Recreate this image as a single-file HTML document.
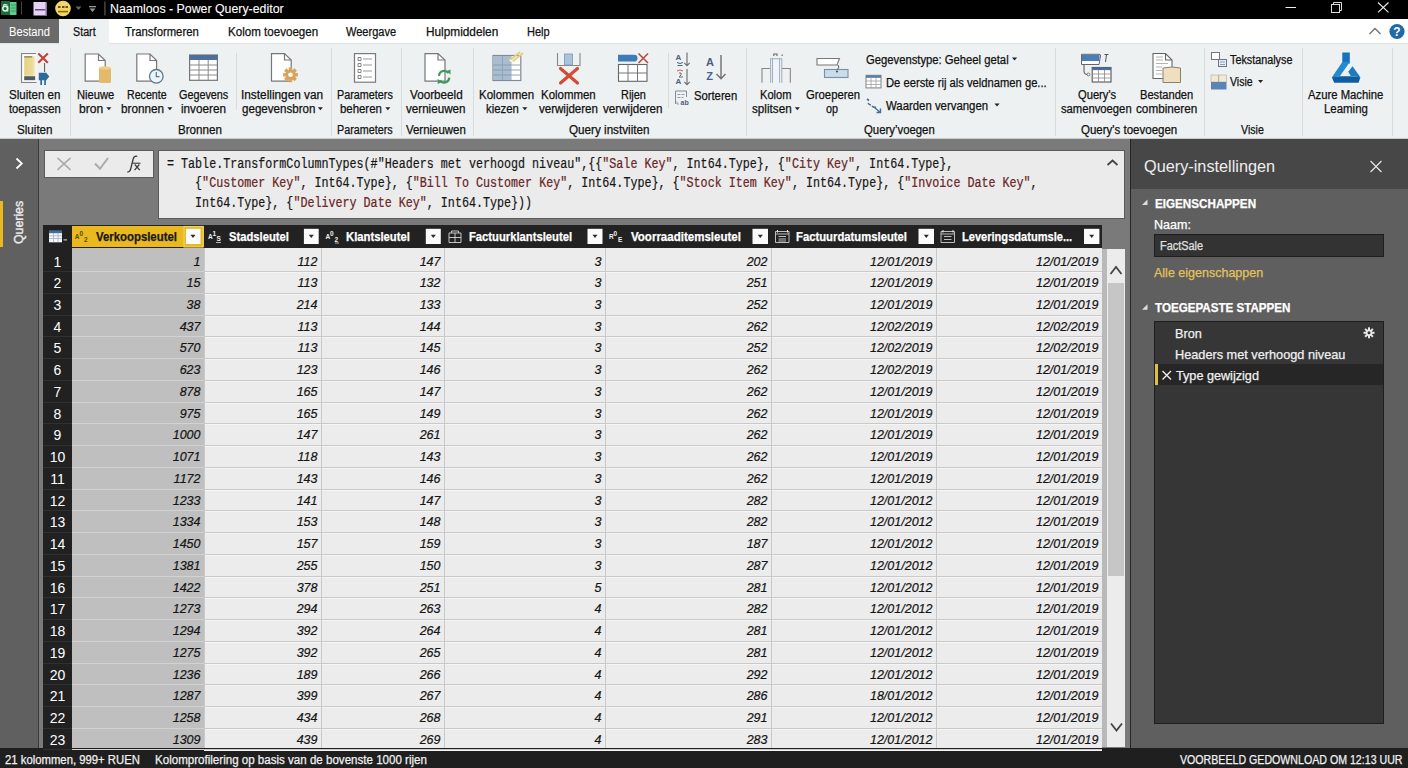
<!DOCTYPE html><html><head><meta charset="utf-8"><title>Power Query-editor</title><style>*{margin:0;padding:0;box-sizing:border-box}
html,body{width:1408px;height:768px;overflow:hidden;background:#7a7a7a;font-family:"Liberation Sans",sans-serif;position:relative}
.a{position:absolute;white-space:nowrap}
.t{position:absolute;white-space:nowrap;transform-origin:0 0;-webkit-text-stroke:0.25px currentColor}
.rn{position:absolute;left:43px;width:29px;height:21.7px;line-height:24px;font-size:14px;color:#fff;text-align:center}
.cell{position:absolute;height:21.7px;line-height:24px;font-size:12.5px;font-style:italic;color:#141414;text-align:right;white-space:nowrap;-webkit-text-stroke:0.2px #141414}
</style></head><body><div class="a" style="left:0;top:0;width:1408px;height:19px;background:#000"></div>
<div class="a" style="left:0;top:19px;width:1408px;height:24px;background:#fff"></div>
<div class="a" style="left:0;top:19px;width:59px;height:24px;background:#6a6a6a"></div>
<div class="a" style="left:59px;top:19px;width:50px;height:25px;background:#eef1f2"></div>
<div class="a" style="left:0;top:43px;width:1408px;height:96px;background:#eef1f2;border-top:1px solid #dedfe0;border-bottom:1px solid #c9c9c9"></div>
<div class="a" style="left:59px;top:43px;width:50px;height:2px;background:#eef1f2"></div>
<!-- separators -->
<div class="a" style="left:70px;top:48px;width:1px;height:88px;background:#d9dadb"></div>
<div class="a" style="left:236px;top:53px;width:1px;height:57px;background:#d9dadb"></div>
<div class="a" style="left:331px;top:48px;width:1px;height:88px;background:#d9dadb"></div>
<div class="a" style="left:401px;top:48px;width:1px;height:88px;background:#d9dadb"></div>
<div class="a" style="left:473px;top:48px;width:1px;height:88px;background:#d9dadb"></div>
<div class="a" style="left:668px;top:53px;width:1px;height:55px;background:#d9dadb"></div>
<div class="a" style="left:746px;top:48px;width:1px;height:88px;background:#d9dadb"></div>
<div class="a" style="left:1055px;top:48px;width:1px;height:88px;background:#d9dadb"></div>
<div class="a" style="left:1204px;top:48px;width:1px;height:88px;background:#d9dadb"></div>
<div class="a" style="left:1302px;top:48px;width:1px;height:88px;background:#d9dadb"></div>
<div class="a" style="left:1392px;top:48px;width:1px;height:88px;background:#d9dadb"></div>
<!-- sidebar -->
<div class="a" style="left:0;top:139px;width:38px;height:609px;background:#606060"></div>
<div class="a" style="left:38px;top:139px;width:1px;height:609px;background:#3a3a3a"></div>
<div class="a" style="left:0;top:201px;width:3.3px;height:46px;background:#e9b91f"></div>
<!-- formula bar -->
<div class="a" style="left:43.5px;top:150px;width:110px;height:28px;background:#ebebeb;border:1px solid #5a5a5a"></div>
<div class="a" style="left:157.5px;top:150px;width:967.5px;height:69px;background:#ebebeb;border:1px solid #5a5a5a"></div>
<!-- table header -->
<div class="a" style="left:43px;top:225px;width:1059px;height:24.5px;background:#222"></div>
<div class="a" style="left:72px;top:226px;width:132px;height:21px;background:#e9b91f"></div>
<!-- scrollbar -->
<div class="a" style="left:1102px;top:249px;width:5px;height:498px;background:#b9b9b9"></div>
<div class="a" style="left:1107px;top:249px;width:18px;height:498px;background:#ececec"></div>
<div class="a" style="left:1108px;top:283px;width:16px;height:293px;background:#c6c6c6"></div>
<!-- right panel -->
<div class="a" style="left:1130px;top:139px;width:1px;height:609px;background:#262626"></div>
<div class="a" style="left:1131px;top:139px;width:277px;height:49.5px;background:#474747"></div>
<div class="a" style="left:1131px;top:188.5px;width:277px;height:559.5px;background:#5f5f5f"></div>
<div class="a" style="left:1154px;top:233.5px;width:230px;height:23px;background:#333;border:1px solid #1e1e1e"></div>
<div class="a" style="left:1154px;top:320.5px;width:229.5px;height:403px;background:#363636;border:1px solid #1e1e1e"></div>
<div class="a" style="left:1155px;top:364px;width:227.5px;height:20.5px;background:#262626"></div>
<div class="a" style="left:1154.5px;top:364px;width:3px;height:20.5px;background:#e0c040"></div>
<!-- status bar -->
<div class="a" style="left:0;top:747.5px;width:1408px;height:20.5px;background:#1f1f1f"></div>
<div class="a" style="left:43px;top:225px;width:29px;height:523px;background:#212121"></div><div class="a" style="left:72px;top:248px;width:132px;height:500px;background:#bfbfbf"></div><div class="a" style="left:204px;top:248px;width:898px;height:500px;background:#ececec"></div><div class="a" style="left:72px;top:271.24px;width:132px;height:1px;background:#d2d2d2"></div><div class="a" style="left:204px;top:271.24px;width:898px;height:1px;background:#c9c9c9"></div><div class="a" style="left:204px;top:272.24px;width:898px;height:1px;background:#f5f5f5"></div><div class="a" style="left:43px;top:271.24px;width:29px;height:1px;background:#303030"></div><div class="rn" style="top:249.50px">1</div><div class="cell" style="top:249.50px;left:72px;width:128.5px">1</div><div class="cell" style="top:249.50px;left:204px;width:113.5px">112</div><div class="cell" style="top:249.50px;left:321px;width:119.5px">147</div><div class="cell" style="top:249.50px;left:444px;width:157.5px">3</div><div class="cell" style="top:249.50px;left:605px;width:162.5px">202</div><div class="cell" style="top:249.50px;left:771px;width:161.5px">12/01/2019</div><div class="cell" style="top:249.50px;left:936px;width:162.5px">12/01/2019</div><div class="a" style="left:72px;top:292.97px;width:132px;height:1px;background:#d2d2d2"></div><div class="a" style="left:204px;top:292.97px;width:898px;height:1px;background:#c9c9c9"></div><div class="a" style="left:204px;top:293.97px;width:898px;height:1px;background:#f5f5f5"></div><div class="a" style="left:43px;top:292.97px;width:29px;height:1px;background:#303030"></div><div class="rn" style="top:271.24px">2</div><div class="cell" style="top:271.24px;left:72px;width:128.5px">15</div><div class="cell" style="top:271.24px;left:204px;width:113.5px">113</div><div class="cell" style="top:271.24px;left:321px;width:119.5px">132</div><div class="cell" style="top:271.24px;left:444px;width:157.5px">3</div><div class="cell" style="top:271.24px;left:605px;width:162.5px">251</div><div class="cell" style="top:271.24px;left:771px;width:161.5px">12/01/2019</div><div class="cell" style="top:271.24px;left:936px;width:162.5px">12/01/2019</div><div class="a" style="left:72px;top:314.71px;width:132px;height:1px;background:#d2d2d2"></div><div class="a" style="left:204px;top:314.71px;width:898px;height:1px;background:#c9c9c9"></div><div class="a" style="left:204px;top:315.71px;width:898px;height:1px;background:#f5f5f5"></div><div class="a" style="left:43px;top:314.71px;width:29px;height:1px;background:#303030"></div><div class="rn" style="top:292.97px">3</div><div class="cell" style="top:292.97px;left:72px;width:128.5px">38</div><div class="cell" style="top:292.97px;left:204px;width:113.5px">214</div><div class="cell" style="top:292.97px;left:321px;width:119.5px">133</div><div class="cell" style="top:292.97px;left:444px;width:157.5px">3</div><div class="cell" style="top:292.97px;left:605px;width:162.5px">252</div><div class="cell" style="top:292.97px;left:771px;width:161.5px">12/01/2019</div><div class="cell" style="top:292.97px;left:936px;width:162.5px">12/01/2019</div><div class="a" style="left:72px;top:336.45px;width:132px;height:1px;background:#d2d2d2"></div><div class="a" style="left:204px;top:336.45px;width:898px;height:1px;background:#c9c9c9"></div><div class="a" style="left:204px;top:337.45px;width:898px;height:1px;background:#f5f5f5"></div><div class="a" style="left:43px;top:336.45px;width:29px;height:1px;background:#303030"></div><div class="rn" style="top:314.71px">4</div><div class="cell" style="top:314.71px;left:72px;width:128.5px">437</div><div class="cell" style="top:314.71px;left:204px;width:113.5px">113</div><div class="cell" style="top:314.71px;left:321px;width:119.5px">144</div><div class="cell" style="top:314.71px;left:444px;width:157.5px">3</div><div class="cell" style="top:314.71px;left:605px;width:162.5px">262</div><div class="cell" style="top:314.71px;left:771px;width:161.5px">12/02/2019</div><div class="cell" style="top:314.71px;left:936px;width:162.5px">12/02/2019</div><div class="a" style="left:72px;top:358.19px;width:132px;height:1px;background:#d2d2d2"></div><div class="a" style="left:204px;top:358.19px;width:898px;height:1px;background:#c9c9c9"></div><div class="a" style="left:204px;top:359.19px;width:898px;height:1px;background:#f5f5f5"></div><div class="a" style="left:43px;top:358.19px;width:29px;height:1px;background:#303030"></div><div class="rn" style="top:336.45px">5</div><div class="cell" style="top:336.45px;left:72px;width:128.5px">570</div><div class="cell" style="top:336.45px;left:204px;width:113.5px">113</div><div class="cell" style="top:336.45px;left:321px;width:119.5px">145</div><div class="cell" style="top:336.45px;left:444px;width:157.5px">3</div><div class="cell" style="top:336.45px;left:605px;width:162.5px">252</div><div class="cell" style="top:336.45px;left:771px;width:161.5px">12/02/2019</div><div class="cell" style="top:336.45px;left:936px;width:162.5px">12/02/2019</div><div class="a" style="left:72px;top:379.92px;width:132px;height:1px;background:#d2d2d2"></div><div class="a" style="left:204px;top:379.92px;width:898px;height:1px;background:#c9c9c9"></div><div class="a" style="left:204px;top:380.92px;width:898px;height:1px;background:#f5f5f5"></div><div class="a" style="left:43px;top:379.92px;width:29px;height:1px;background:#303030"></div><div class="rn" style="top:358.19px">6</div><div class="cell" style="top:358.19px;left:72px;width:128.5px">623</div><div class="cell" style="top:358.19px;left:204px;width:113.5px">123</div><div class="cell" style="top:358.19px;left:321px;width:119.5px">146</div><div class="cell" style="top:358.19px;left:444px;width:157.5px">3</div><div class="cell" style="top:358.19px;left:605px;width:162.5px">262</div><div class="cell" style="top:358.19px;left:771px;width:161.5px">12/02/2019</div><div class="cell" style="top:358.19px;left:936px;width:162.5px">12/01/2019</div><div class="a" style="left:72px;top:401.66px;width:132px;height:1px;background:#d2d2d2"></div><div class="a" style="left:204px;top:401.66px;width:898px;height:1px;background:#c9c9c9"></div><div class="a" style="left:204px;top:402.66px;width:898px;height:1px;background:#f5f5f5"></div><div class="a" style="left:43px;top:401.66px;width:29px;height:1px;background:#303030"></div><div class="rn" style="top:379.92px">7</div><div class="cell" style="top:379.92px;left:72px;width:128.5px">878</div><div class="cell" style="top:379.92px;left:204px;width:113.5px">165</div><div class="cell" style="top:379.92px;left:321px;width:119.5px">147</div><div class="cell" style="top:379.92px;left:444px;width:157.5px">3</div><div class="cell" style="top:379.92px;left:605px;width:162.5px">262</div><div class="cell" style="top:379.92px;left:771px;width:161.5px">12/01/2019</div><div class="cell" style="top:379.92px;left:936px;width:162.5px">12/01/2019</div><div class="a" style="left:72px;top:423.40px;width:132px;height:1px;background:#d2d2d2"></div><div class="a" style="left:204px;top:423.40px;width:898px;height:1px;background:#c9c9c9"></div><div class="a" style="left:204px;top:424.40px;width:898px;height:1px;background:#f5f5f5"></div><div class="a" style="left:43px;top:423.40px;width:29px;height:1px;background:#303030"></div><div class="rn" style="top:401.66px">8</div><div class="cell" style="top:401.66px;left:72px;width:128.5px">975</div><div class="cell" style="top:401.66px;left:204px;width:113.5px">165</div><div class="cell" style="top:401.66px;left:321px;width:119.5px">149</div><div class="cell" style="top:401.66px;left:444px;width:157.5px">3</div><div class="cell" style="top:401.66px;left:605px;width:162.5px">262</div><div class="cell" style="top:401.66px;left:771px;width:161.5px">12/01/2019</div><div class="cell" style="top:401.66px;left:936px;width:162.5px">12/01/2019</div><div class="a" style="left:72px;top:445.13px;width:132px;height:1px;background:#d2d2d2"></div><div class="a" style="left:204px;top:445.13px;width:898px;height:1px;background:#c9c9c9"></div><div class="a" style="left:204px;top:446.13px;width:898px;height:1px;background:#f5f5f5"></div><div class="a" style="left:43px;top:445.13px;width:29px;height:1px;background:#303030"></div><div class="rn" style="top:423.40px">9</div><div class="cell" style="top:423.40px;left:72px;width:128.5px">1000</div><div class="cell" style="top:423.40px;left:204px;width:113.5px">147</div><div class="cell" style="top:423.40px;left:321px;width:119.5px">261</div><div class="cell" style="top:423.40px;left:444px;width:157.5px">3</div><div class="cell" style="top:423.40px;left:605px;width:162.5px">262</div><div class="cell" style="top:423.40px;left:771px;width:161.5px">12/01/2019</div><div class="cell" style="top:423.40px;left:936px;width:162.5px">12/01/2019</div><div class="a" style="left:72px;top:466.87px;width:132px;height:1px;background:#d2d2d2"></div><div class="a" style="left:204px;top:466.87px;width:898px;height:1px;background:#c9c9c9"></div><div class="a" style="left:204px;top:467.87px;width:898px;height:1px;background:#f5f5f5"></div><div class="a" style="left:43px;top:466.87px;width:29px;height:1px;background:#303030"></div><div class="rn" style="top:445.13px">10</div><div class="cell" style="top:445.13px;left:72px;width:128.5px">1071</div><div class="cell" style="top:445.13px;left:204px;width:113.5px">118</div><div class="cell" style="top:445.13px;left:321px;width:119.5px">143</div><div class="cell" style="top:445.13px;left:444px;width:157.5px">3</div><div class="cell" style="top:445.13px;left:605px;width:162.5px">262</div><div class="cell" style="top:445.13px;left:771px;width:161.5px">12/01/2019</div><div class="cell" style="top:445.13px;left:936px;width:162.5px">12/01/2019</div><div class="a" style="left:72px;top:488.61px;width:132px;height:1px;background:#d2d2d2"></div><div class="a" style="left:204px;top:488.61px;width:898px;height:1px;background:#c9c9c9"></div><div class="a" style="left:204px;top:489.61px;width:898px;height:1px;background:#f5f5f5"></div><div class="a" style="left:43px;top:488.61px;width:29px;height:1px;background:#303030"></div><div class="rn" style="top:466.87px">11</div><div class="cell" style="top:466.87px;left:72px;width:128.5px">1172</div><div class="cell" style="top:466.87px;left:204px;width:113.5px">143</div><div class="cell" style="top:466.87px;left:321px;width:119.5px">146</div><div class="cell" style="top:466.87px;left:444px;width:157.5px">3</div><div class="cell" style="top:466.87px;left:605px;width:162.5px">262</div><div class="cell" style="top:466.87px;left:771px;width:161.5px">12/01/2019</div><div class="cell" style="top:466.87px;left:936px;width:162.5px">12/01/2019</div><div class="a" style="left:72px;top:510.34px;width:132px;height:1px;background:#d2d2d2"></div><div class="a" style="left:204px;top:510.34px;width:898px;height:1px;background:#c9c9c9"></div><div class="a" style="left:204px;top:511.34px;width:898px;height:1px;background:#f5f5f5"></div><div class="a" style="left:43px;top:510.34px;width:29px;height:1px;background:#303030"></div><div class="rn" style="top:488.61px">12</div><div class="cell" style="top:488.61px;left:72px;width:128.5px">1233</div><div class="cell" style="top:488.61px;left:204px;width:113.5px">141</div><div class="cell" style="top:488.61px;left:321px;width:119.5px">147</div><div class="cell" style="top:488.61px;left:444px;width:157.5px">3</div><div class="cell" style="top:488.61px;left:605px;width:162.5px">282</div><div class="cell" style="top:488.61px;left:771px;width:161.5px">12/01/2012</div><div class="cell" style="top:488.61px;left:936px;width:162.5px">12/01/2019</div><div class="a" style="left:72px;top:532.08px;width:132px;height:1px;background:#d2d2d2"></div><div class="a" style="left:204px;top:532.08px;width:898px;height:1px;background:#c9c9c9"></div><div class="a" style="left:204px;top:533.08px;width:898px;height:1px;background:#f5f5f5"></div><div class="a" style="left:43px;top:532.08px;width:29px;height:1px;background:#303030"></div><div class="rn" style="top:510.34px">13</div><div class="cell" style="top:510.34px;left:72px;width:128.5px">1334</div><div class="cell" style="top:510.34px;left:204px;width:113.5px">153</div><div class="cell" style="top:510.34px;left:321px;width:119.5px">148</div><div class="cell" style="top:510.34px;left:444px;width:157.5px">3</div><div class="cell" style="top:510.34px;left:605px;width:162.5px">282</div><div class="cell" style="top:510.34px;left:771px;width:161.5px">12/01/2012</div><div class="cell" style="top:510.34px;left:936px;width:162.5px">12/01/2019</div><div class="a" style="left:72px;top:553.82px;width:132px;height:1px;background:#d2d2d2"></div><div class="a" style="left:204px;top:553.82px;width:898px;height:1px;background:#c9c9c9"></div><div class="a" style="left:204px;top:554.82px;width:898px;height:1px;background:#f5f5f5"></div><div class="a" style="left:43px;top:553.82px;width:29px;height:1px;background:#303030"></div><div class="rn" style="top:532.08px">14</div><div class="cell" style="top:532.08px;left:72px;width:128.5px">1450</div><div class="cell" style="top:532.08px;left:204px;width:113.5px">157</div><div class="cell" style="top:532.08px;left:321px;width:119.5px">159</div><div class="cell" style="top:532.08px;left:444px;width:157.5px">3</div><div class="cell" style="top:532.08px;left:605px;width:162.5px">187</div><div class="cell" style="top:532.08px;left:771px;width:161.5px">12/01/2012</div><div class="cell" style="top:532.08px;left:936px;width:162.5px">12/01/2019</div><div class="a" style="left:72px;top:575.55px;width:132px;height:1px;background:#d2d2d2"></div><div class="a" style="left:204px;top:575.55px;width:898px;height:1px;background:#c9c9c9"></div><div class="a" style="left:204px;top:576.55px;width:898px;height:1px;background:#f5f5f5"></div><div class="a" style="left:43px;top:575.55px;width:29px;height:1px;background:#303030"></div><div class="rn" style="top:553.82px">15</div><div class="cell" style="top:553.82px;left:72px;width:128.5px">1381</div><div class="cell" style="top:553.82px;left:204px;width:113.5px">255</div><div class="cell" style="top:553.82px;left:321px;width:119.5px">150</div><div class="cell" style="top:553.82px;left:444px;width:157.5px">3</div><div class="cell" style="top:553.82px;left:605px;width:162.5px">287</div><div class="cell" style="top:553.82px;left:771px;width:161.5px">12/01/2012</div><div class="cell" style="top:553.82px;left:936px;width:162.5px">12/01/2019</div><div class="a" style="left:72px;top:597.29px;width:132px;height:1px;background:#d2d2d2"></div><div class="a" style="left:204px;top:597.29px;width:898px;height:1px;background:#c9c9c9"></div><div class="a" style="left:204px;top:598.29px;width:898px;height:1px;background:#f5f5f5"></div><div class="a" style="left:43px;top:597.29px;width:29px;height:1px;background:#303030"></div><div class="rn" style="top:575.55px">16</div><div class="cell" style="top:575.55px;left:72px;width:128.5px">1422</div><div class="cell" style="top:575.55px;left:204px;width:113.5px">378</div><div class="cell" style="top:575.55px;left:321px;width:119.5px">251</div><div class="cell" style="top:575.55px;left:444px;width:157.5px">5</div><div class="cell" style="top:575.55px;left:605px;width:162.5px">281</div><div class="cell" style="top:575.55px;left:771px;width:161.5px">12/01/2012</div><div class="cell" style="top:575.55px;left:936px;width:162.5px">12/01/2019</div><div class="a" style="left:72px;top:619.03px;width:132px;height:1px;background:#d2d2d2"></div><div class="a" style="left:204px;top:619.03px;width:898px;height:1px;background:#c9c9c9"></div><div class="a" style="left:204px;top:620.03px;width:898px;height:1px;background:#f5f5f5"></div><div class="a" style="left:43px;top:619.03px;width:29px;height:1px;background:#303030"></div><div class="rn" style="top:597.29px">17</div><div class="cell" style="top:597.29px;left:72px;width:128.5px">1273</div><div class="cell" style="top:597.29px;left:204px;width:113.5px">294</div><div class="cell" style="top:597.29px;left:321px;width:119.5px">263</div><div class="cell" style="top:597.29px;left:444px;width:157.5px">4</div><div class="cell" style="top:597.29px;left:605px;width:162.5px">282</div><div class="cell" style="top:597.29px;left:771px;width:161.5px">12/01/2012</div><div class="cell" style="top:597.29px;left:936px;width:162.5px">12/01/2019</div><div class="a" style="left:72px;top:640.77px;width:132px;height:1px;background:#d2d2d2"></div><div class="a" style="left:204px;top:640.77px;width:898px;height:1px;background:#c9c9c9"></div><div class="a" style="left:204px;top:641.77px;width:898px;height:1px;background:#f5f5f5"></div><div class="a" style="left:43px;top:640.77px;width:29px;height:1px;background:#303030"></div><div class="rn" style="top:619.03px">18</div><div class="cell" style="top:619.03px;left:72px;width:128.5px">1294</div><div class="cell" style="top:619.03px;left:204px;width:113.5px">392</div><div class="cell" style="top:619.03px;left:321px;width:119.5px">264</div><div class="cell" style="top:619.03px;left:444px;width:157.5px">4</div><div class="cell" style="top:619.03px;left:605px;width:162.5px">281</div><div class="cell" style="top:619.03px;left:771px;width:161.5px">12/01/2012</div><div class="cell" style="top:619.03px;left:936px;width:162.5px">12/01/2019</div><div class="a" style="left:72px;top:662.50px;width:132px;height:1px;background:#d2d2d2"></div><div class="a" style="left:204px;top:662.50px;width:898px;height:1px;background:#c9c9c9"></div><div class="a" style="left:204px;top:663.50px;width:898px;height:1px;background:#f5f5f5"></div><div class="a" style="left:43px;top:662.50px;width:29px;height:1px;background:#303030"></div><div class="rn" style="top:640.77px">19</div><div class="cell" style="top:640.77px;left:72px;width:128.5px">1275</div><div class="cell" style="top:640.77px;left:204px;width:113.5px">392</div><div class="cell" style="top:640.77px;left:321px;width:119.5px">265</div><div class="cell" style="top:640.77px;left:444px;width:157.5px">4</div><div class="cell" style="top:640.77px;left:605px;width:162.5px">281</div><div class="cell" style="top:640.77px;left:771px;width:161.5px">12/01/2012</div><div class="cell" style="top:640.77px;left:936px;width:162.5px">12/01/2019</div><div class="a" style="left:72px;top:684.24px;width:132px;height:1px;background:#d2d2d2"></div><div class="a" style="left:204px;top:684.24px;width:898px;height:1px;background:#c9c9c9"></div><div class="a" style="left:204px;top:685.24px;width:898px;height:1px;background:#f5f5f5"></div><div class="a" style="left:43px;top:684.24px;width:29px;height:1px;background:#303030"></div><div class="rn" style="top:662.50px">20</div><div class="cell" style="top:662.50px;left:72px;width:128.5px">1236</div><div class="cell" style="top:662.50px;left:204px;width:113.5px">189</div><div class="cell" style="top:662.50px;left:321px;width:119.5px">266</div><div class="cell" style="top:662.50px;left:444px;width:157.5px">4</div><div class="cell" style="top:662.50px;left:605px;width:162.5px">292</div><div class="cell" style="top:662.50px;left:771px;width:161.5px">12/01/2012</div><div class="cell" style="top:662.50px;left:936px;width:162.5px">12/01/2019</div><div class="a" style="left:72px;top:705.98px;width:132px;height:1px;background:#d2d2d2"></div><div class="a" style="left:204px;top:705.98px;width:898px;height:1px;background:#c9c9c9"></div><div class="a" style="left:204px;top:706.98px;width:898px;height:1px;background:#f5f5f5"></div><div class="a" style="left:43px;top:705.98px;width:29px;height:1px;background:#303030"></div><div class="rn" style="top:684.24px">21</div><div class="cell" style="top:684.24px;left:72px;width:128.5px">1287</div><div class="cell" style="top:684.24px;left:204px;width:113.5px">399</div><div class="cell" style="top:684.24px;left:321px;width:119.5px">267</div><div class="cell" style="top:684.24px;left:444px;width:157.5px">4</div><div class="cell" style="top:684.24px;left:605px;width:162.5px">286</div><div class="cell" style="top:684.24px;left:771px;width:161.5px">18/01/2012</div><div class="cell" style="top:684.24px;left:936px;width:162.5px">12/01/2019</div><div class="a" style="left:72px;top:727.71px;width:132px;height:1px;background:#d2d2d2"></div><div class="a" style="left:204px;top:727.71px;width:898px;height:1px;background:#c9c9c9"></div><div class="a" style="left:204px;top:728.71px;width:898px;height:1px;background:#f5f5f5"></div><div class="a" style="left:43px;top:727.71px;width:29px;height:1px;background:#303030"></div><div class="rn" style="top:705.98px">22</div><div class="cell" style="top:705.98px;left:72px;width:128.5px">1258</div><div class="cell" style="top:705.98px;left:204px;width:113.5px">434</div><div class="cell" style="top:705.98px;left:321px;width:119.5px">268</div><div class="cell" style="top:705.98px;left:444px;width:157.5px">4</div><div class="cell" style="top:705.98px;left:605px;width:162.5px">291</div><div class="cell" style="top:705.98px;left:771px;width:161.5px">12/01/2012</div><div class="cell" style="top:705.98px;left:936px;width:162.5px">12/01/2019</div><div class="a" style="left:72px;top:749.45px;width:132px;height:1px;background:#d2d2d2"></div><div class="a" style="left:204px;top:749.45px;width:898px;height:1px;background:#c9c9c9"></div><div class="a" style="left:204px;top:750.45px;width:898px;height:1px;background:#f5f5f5"></div><div class="a" style="left:43px;top:749.45px;width:29px;height:1px;background:#303030"></div><div class="rn" style="top:727.71px">23</div><div class="cell" style="top:727.71px;left:72px;width:128.5px">1309</div><div class="cell" style="top:727.71px;left:204px;width:113.5px">439</div><div class="cell" style="top:727.71px;left:321px;width:119.5px">269</div><div class="cell" style="top:727.71px;left:444px;width:157.5px">4</div><div class="cell" style="top:727.71px;left:605px;width:162.5px">283</div><div class="cell" style="top:727.71px;left:771px;width:161.5px">12/01/2012</div><div class="cell" style="top:727.71px;left:936px;width:162.5px">12/01/2019</div><div class="a" style="left:204px;top:248px;width:1px;height:500px;background:#c9c9c9"></div><div class="a" style="left:321px;top:248px;width:1px;height:500px;background:#c9c9c9"></div><div class="a" style="left:444px;top:248px;width:1px;height:500px;background:#c9c9c9"></div><div class="a" style="left:605px;top:248px;width:1px;height:500px;background:#c9c9c9"></div><div class="a" style="left:771px;top:248px;width:1px;height:500px;background:#c9c9c9"></div><div class="a" style="left:936px;top:248px;width:1px;height:500px;background:#c9c9c9"></div><svg class="a" style="left:0;top:0" width="1408" height="768" viewBox="0 0 1408 768">
<!-- title bar icons -->
<rect x="1" y="1" width="9" height="14" fill="#1d6b3b"/>
<rect x="10" y="2" width="6.5" height="13" fill="#5fcb8d"/>
<path d="M11 5h5M11 8h5M11 11h5" stroke="#2f8f55" stroke-width="0.8"/>
<circle cx="5.2" cy="8.6" r="2.4" fill="none" stroke="#d8f5e3" stroke-width="1.5"/><path d="M7.6 6 V11.5" stroke="#d8f5e3" stroke-width="1.4"/><path d="M3 5.5 Q5 3.8 7.5 5.2" fill="none" stroke="#d8f5e3" stroke-width="1.2"/>
<rect x="21" y="1.5" width="1" height="13" fill="#444"/>
<rect x="33.5" y="2" width="13.5" height="13.5" fill="#e6d3f3"/>
<rect x="35" y="9" width="10.5" height="1.5" fill="#6a4a8a"/>
<rect x="45.5" y="2" width="1.5" height="13.5" fill="#8a70a0"/>
<circle cx="63" cy="8.5" r="7.8" fill="#f2d569"/>
<rect x="58" y="6" width="2.5" height="2" fill="#6b5010"/><rect x="62" y="6" width="2.5" height="2" fill="#6b5010"/><rect x="65.5" y="6" width="2.5" height="2" fill="#6b5010"/>
<rect x="58" y="10.8" width="10" height="1.6" fill="#8a6a10"/>
<path d="M75.5 6.5 L81.5 6.5 L78.5 10 Z" fill="#666"/>
<rect x="89" y="6" width="7" height="1.3" fill="#999"/>
<path d="M89.5 8.5 L95.5 8.5 L92.5 12 Z" fill="#999"/>
<rect x="104" y="1.5" width="1.8" height="14" fill="#3a3a3a"/>
<!-- window controls -->
<rect x="1285.5" y="7" width="10.5" height="1" fill="#eee"/>
<rect x="1331.5" y="4.5" width="8" height="8" fill="none" stroke="#ddd" stroke-width="1"/>
<path d="M1333.5 4.5 V2.5 H1341.5 V10.5 H1339.5" fill="none" stroke="#ddd" stroke-width="1"/>
<path d="M1378 2.5 L1388.5 12.3 M1388.5 2.5 L1378 12.3" stroke="#eee" stroke-width="1.1"/>
<!-- tab bar right -->
<path d="M1369.5 34 L1375 28.5 L1380.5 34" fill="none" stroke="#777" stroke-width="1.5"/>
<circle cx="1397" cy="31.5" r="7.6" fill="#1f69a8"/>
<text x="1397" y="36" font-family="Liberation Sans" font-weight="bold" font-size="12" fill="#fff" text-anchor="middle">?</text>

<!-- Sluiten en toepassen -->
<defs><linearGradient id="yg" x1="0" x2="1" y1="0" y2="0"><stop offset="0" stop-color="#e3d37f"/><stop offset="0.7" stop-color="#e9dc98"/><stop offset="1" stop-color="#f4efd6"/></linearGradient></defs>
<path d="M36 53.6 H21.6 V82.4 H36.5" fill="none" stroke="#858585" stroke-width="1.3"/>
<rect x="22.3" y="54.3" width="14" height="27.4" fill="#fff"/>
<rect x="24.2" y="56.2" width="11.5" height="19.5" fill="url(#yg)"/>
<rect x="24.2" y="56.2" width="8" height="1.3" fill="#8f7f50"/>
<rect x="24.2" y="76.2" width="11" height="4" fill="#535a60"/>
<path d="M38.3 53.5 L47.8 62.8 M47.8 53.5 L38.3 62.8" stroke="#c0403a" stroke-width="2.1"/>
<path d="M44.6 63 V72" stroke="#555" stroke-width="1"/>
<path d="M38.8 72.8 H46.2 L49.3 76.6 L46.2 80.2 H45.9 V85 H44.2 V80.2 H42 V85 H40.3 V80.2 H38.8 Z" fill="#2b6c9a"/>
<!-- doc helper: Nieuwe bron -->
<path d="M85.2 54 H98.5 L105.2 60.5 V81.2 H85.2 Z" fill="#fff" stroke="#777" stroke-width="1.2"/>
<path d="M98.5 54 V60.5 H105.2" fill="none" stroke="#777" stroke-width="1.2"/>
<rect x="99" y="67.5" width="12" height="15.5" rx="1.5" fill="#e4b96c"/>
<ellipse cx="105" cy="68" rx="6" ry="1.8" fill="#efcd8a"/>
<!-- Recente bronnen -->
<path d="M136.8 54 H150 L156.6 60.5 V81.2 H136.8 Z" fill="#fff" stroke="#777" stroke-width="1.2"/>
<path d="M150 54 V60.5 H156.6" fill="none" stroke="#777" stroke-width="1.2"/>
<circle cx="156.3" cy="76.3" r="6.8" fill="#e9f4fb" stroke="#5e7685" stroke-width="1.3"/>
<path d="M156.3 72 V76.6 H159.5" fill="none" stroke="#5e7685" stroke-width="1.2"/>
<!-- Gegevens invoeren -->
<rect x="189.6" y="55" width="27.8" height="25.3" fill="#fff" stroke="#757575" stroke-width="1.2"/>
<rect x="189.6" y="55" width="27.8" height="5" fill="#4c709b"/>
<path d="M199 60 V80 M208.2 60 V80 M189.6 65 H217.4 M189.6 70 H217.4 M189.6 75 H217.4" stroke="#8a8a8a" stroke-width="1"/>
<!-- Instellingen -->
<path d="M271.5 53.6 H284.5 L291.2 60 V81.2 H271.5 Z" fill="#fff" stroke="#777" stroke-width="1.2"/>
<path d="M284.5 53.6 V60 H291.2" fill="none" stroke="#777" stroke-width="1.2"/>
<g transform="translate(290.5 74.8)" fill="#d8a35d">
<circle r="5.2"/>
<rect x="-1.7" y="-7.4" width="3.4" height="14.8"/>
<rect x="-1.7" y="-7.4" width="3.4" height="14.8" transform="rotate(45)"/>
<rect x="-1.7" y="-7.4" width="3.4" height="14.8" transform="rotate(90)"/>
<rect x="-1.7" y="-7.4" width="3.4" height="14.8" transform="rotate(135)"/>
<circle r="2.3" fill="#fff"/>
</g>
<!-- Parameters -->
<rect x="354.5" y="53.6" width="21" height="28.6" fill="#fff" stroke="#7a7a7a" stroke-width="1.2"/>
<path d="M358 57.5 h3 v3 h-3 z M358 63.5 h3 v3 h-3 z M358 69.5 h3 v3 h-3 z M358 75.5 h3 v3 h-3 z" fill="none" stroke="#777" stroke-width="0.9"/>
<path d="M363 59 h9 M363 65 h9 M363 71 h9 M363 77 h9" stroke="#999" stroke-width="1.2"/>
<!-- Voorbeeld vernieuwen -->
<path d="M425 53.6 H438 L445 60 V81.2 H425 Z" fill="#fff" stroke="#777" stroke-width="1.2"/>
<path d="M438 53.6 V60 H445" fill="none" stroke="#777" stroke-width="1.2"/>
<path d="M438.9 75.8 A5.4 5.4 0 0 1 448.6 73" fill="none" stroke="#3f9b5d" stroke-width="2.2"/>
<path d="M446.3 71.3 L450.6 74.6 L450.4 69.4 Z" fill="#3f9b5d"/>
<path d="M449.3 77.6 A5.4 5.4 0 0 1 439.6 80.4" fill="none" stroke="#3f9b5d" stroke-width="2.2"/>
<path d="M441.9 82.1 L437.6 78.8 L437.8 84 Z" fill="#3f9b5d"/>
<!-- Kolommen kiezen -->
<rect x="493" y="55.5" width="27.8" height="25" fill="#fff" stroke="#7f8a94" stroke-width="1.2"/>
<rect x="493.6" y="56" width="18" height="24" fill="#a9bdd0"/>
<path d="M511.6 65 H520.8 M511.6 70 H520.8 M511.6 75 H520.8 M493 65 H511.6 M493 70 H511.6 M493 75 H511.6" stroke="#8898a8" stroke-width="0.9"/>
<path d="M502.5 56 V80" stroke="#8ea3b8" stroke-width="0.9"/>
<path d="M509 61 L520 52 M512 62 L523 53" stroke="#e4cf82" stroke-width="2"/>
<path d="M510 60 l3 2" stroke="#fff" stroke-width="1.5"/>
<!-- Kolommen verwijderen -->
<path d="M557.5 53 V65.5 H580 V53" fill="none" stroke="#888" stroke-width="1.1"/>
<rect x="564.5" y="54" width="8" height="11" fill="#a9c5dd" stroke="#7e96aa" stroke-width="0.8"/>
<path d="M560.5 68.5 L577.5 83 M577.5 68.5 L560.5 83" stroke="#d54b31" stroke-width="3.2" stroke-linecap="round"/>
<!-- Rijen verwijderen -->
<path d="M618 54.8 H634 Q637.5 54.8 637.5 58.2 Q637.5 61.6 634 61.6 H618 Z" fill="#3e79b8"/>
<path d="M638.5 53.5 L648 63 M648 53.5 L638.5 63" stroke="#b5493b" stroke-width="1.5"/>
<rect x="618.5" y="64.5" width="28.5" height="16.8" fill="#fff" stroke="#666" stroke-width="1.1"/>
<path d="M628 64.5 V81.3 M637.5 64.5 V81.3 M618.5 73 H647" stroke="#777" stroke-width="1"/>

<!-- sort small -->
<text x="675.5" y="60" font-family="Liberation Sans" font-size="8" fill="#4f6077" font-weight="bold">A</text>
<path d="M677 62.5 q3 2 6 0 M677.5 65.5 h5" stroke="#4f6077" fill="none" stroke-width="1"/>
<path d="M677 71 q3 -2 6 0" stroke="#c4605a" fill="none" stroke-width="1"/>
<path d="M679 73 q3 -1 2 2 l-2 2 h4" stroke="#555d66" fill="none" stroke-width="0.9"/>
<text x="675.5" y="84" font-family="Liberation Sans" font-size="8" fill="#4f6077" font-weight="bold">A</text>
<path d="M687 52.5 V65.5 M684.3 62.8 L687 65.8 L689.7 62.8 M687 69 V84.5 M684.3 81.8 L687 84.8 L689.7 81.8" stroke="#6a6a6a" fill="none" stroke-width="1.1"/>
<!-- sort AZ -->
<text x="706" y="65.5" font-family="Liberation Sans" font-size="11" font-weight="bold" fill="#4a5f7c">A</text>
<text x="706.3" y="79.5" font-family="Liberation Sans" font-size="11" font-weight="bold" fill="#3f6494">Z</text>
<path d="M721 55 V78.5 M716.5 74 L721 78.8 L725.5 74" stroke="#707070" fill="none" stroke-width="1.4"/>
<!-- Sorteren small icon -->
<path d="M675.5 104 V91 H686.5 V97" fill="none" stroke="#7f8c99" stroke-width="1"/>
<path d="M677.5 94.5 h3 M681.5 94.5 h3 M677.5 97.5 h3 M681.5 97.5 h2" stroke="#8a96a2" stroke-width="0.9"/>
<path d="M677 101.5 v2.5 h2" stroke="#8a96a2" fill="none" stroke-width="0.9"/>
<text x="680.5" y="104.5" font-family="Liberation Sans" font-size="7" font-weight="bold" fill="#50627a">ab</text>
<!-- Kolom splitsen -->
<path d="M762 82.8 V68.5 H770.5 M781.8 68.5 H790.3 V82.8" fill="none" stroke="#878787" stroke-width="1.1"/>
<rect x="770.5" y="58.5" width="11.3" height="24.3" fill="#eef4f9"/>
<path d="M770.6 58.5 V82.8 M772.5 58.5 V82.8 M779.6 58.5 V82.8 M781.8 58.5 V82.8 M770.6 58.8 H781.8" stroke="#93a6b8" stroke-width="0.9"/>
<path d="M773.8 56 V54 H777 V56" stroke="#666" fill="none" stroke-width="1.1"/>
<rect x="781.5" y="54.5" width="1.4" height="1.4" fill="#777"/>
<!-- Groeperen op -->
<path d="M817 58.5 H839.5 L837 65 H817 Z" fill="#fff" stroke="#777" stroke-width="1.1"/>
<rect x="824.5" y="69.5" width="23.5" height="8" fill="#c9dcea" stroke="#7890a6" stroke-width="1.1"/>
<path d="M838 65 q2 2 -0.5 4.5" stroke="#555" fill="none" stroke-width="1"/>
<circle cx="837" cy="71.5" r="0.9" fill="#333"/>

<!-- small table icon (De eerste rij) -->
<rect x="866" y="75.3" width="15" height="12.6" fill="#fff" stroke="#808080" stroke-width="1"/>
<rect x="866" y="75.3" width="15" height="2.5" fill="#5a7ca3"/>
<path d="M866 81 H881 M866 84.5 H881 M871 78 V88 M876 78 V88" stroke="#a0a0a0" stroke-width="0.8"/>
<!-- replace icon -->
<path d="M867 99 l2 1.5 M868 103 q1 2 3 2 M872 106 q2 2 4 1" stroke="#4a6f8f" fill="none" stroke-width="1.6"/>
<path d="M875 108 L880.5 112.5 M880.5 108.5 V112.5 H876.5" stroke="#4a6f8f" fill="none" stroke-width="1.4"/>

<!-- Query's samenvoegen -->
<path d="M1081.5 54.3 H1099 Q1101 54.3 1100.5 56 L1099 64.5 H1081.5 Z" fill="#fff" stroke="#666" stroke-width="1"/>
<rect x="1082" y="54.8" width="17.5" height="6.2" fill="#4a7db5"/>
<path d="M1104.5 54.5 H1108.5 M1106.5 54.5 L1105.5 62" stroke="#555" stroke-width="1"/>
<path d="M1084 65 V72 Q1084 74.5 1087.5 74.5" stroke="#555" fill="none" stroke-width="1"/>
<circle cx="1088.5" cy="74.5" r="1.4" fill="#fff" stroke="#555" stroke-width="0.8"/>
<rect x="1092.2" y="67.5" width="18.8" height="14.5" fill="#fff" stroke="#555" stroke-width="1.1"/>
<rect x="1092.2" y="67.5" width="18.8" height="2.6" fill="#4a6f9c"/>
<path d="M1092.2 74 H1111 M1092.2 78 H1111 M1098.5 70 V82 M1104.5 70 V82" stroke="#888" stroke-width="0.8"/>
<!-- Bestanden combineren -->
<path d="M1153 53.5 H1165.5 L1172 60 V78.5 H1153 Z" fill="#fff" stroke="#666" stroke-width="1.1"/>
<path d="M1165.5 53.5 V60 H1172" fill="none" stroke="#666" stroke-width="1.1"/>
<path d="M1156 57 h7 M1156 60 h7 M1156 63.5 h12 M1156 67 h6 M1156 70.5 h6 M1156 74 h6" stroke="#aaa" stroke-width="0.9"/>
<path d="M1163 68 Q1172 66 1180.5 68 V82.5 H1163 Z" fill="#efdfbf" stroke="#8a8070" stroke-width="1"/>

<!-- Tekstanalyse icon -->
<rect x="1211.5" y="52.5" width="8" height="7" fill="#fff" stroke="#777" stroke-width="1"/>
<rect x="1218.5" y="59.5" width="8" height="7" fill="#e6eef5" stroke="#667788" stroke-width="1"/>
<path d="M1220 62 h5 M1220 64.5 h5" stroke="#778899" stroke-width="0.8"/>
<!-- Visie icon -->
<rect x="1211" y="75" width="15.5" height="7" fill="#f3e8d0" stroke="#aaa" stroke-width="0.6"/>
<path d="M1218.7 75 V82" stroke="#999" stroke-width="0.8"/>
<rect x="1211" y="82" width="15.5" height="7.5" fill="#5c83b3"/>

<!-- Azure ML -->
<rect x="1342.3" y="52.5" width="7.5" height="11" fill="#1672ba"/>
<path d="M1342.3 62 H1349.8 L1339.8 76.3 L1331.8 77.6 Z" fill="#2389d3"/>
<path d="M1331.8 77.2 L1339.8 76.2 H1351 L1360.4 77.2 L1358.6 82.8 H1334.2 Z" fill="#0e5d9f"/>
<path d="M1348.2 71.8 L1352.5 66.2 L1360.4 77.3 L1351 76.3 Z" fill="#1b7cc2"/>
<!-- dropdown triangles -->
<g fill="#222">
<path d="M106.3 107.2 H111.4 L108.85 110.2 Z"/>
<path d="M167.3 107.2 H172.4 L169.85 110.2 Z"/>
<path d="M317.8 107.2 H322.9 L320.35 110.2 Z"/>
<path d="M385.3 107.2 H390.4 L387.85 110.2 Z"/>
<path d="M522.3 107.2 H527.4 L524.85 110.2 Z"/>
<path d="M794.8 107.2 H799.9 L797.35 110.2 Z"/>
<path d="M1012 57.6 H1017.1 L1014.55 60.6 Z"/>
<path d="M994.5 103.4 H999.6 L997.05 106.4 Z"/>
<path d="M1258 80 H1263.1 L1260.55 83 Z"/>
</g>
<!-- formula bar icons -->
<path d="M57.5 157.8 L70.5 169.8 M70.5 157.8 L57.5 169.8" stroke="#ababab" stroke-width="1.6"/>
<path d="M95 163.5 L100 168.8 L108 158" stroke="#ababab" stroke-width="2" fill="none"/>
<path d="M127.3 171.8 Q129.8 172.6 130.8 168.5 L133.2 159 Q134.2 155.6 137.3 156.3" fill="none" stroke="#3a3a3a" stroke-width="1.3"/>
<path d="M132.5 163.2 H140.5" stroke="#3a3a3a" stroke-width="1.1"/>
<path d="M134.8 164.5 L139.8 170.2 M139.3 164.5 L134.6 170.2" stroke="#3a3a3a" stroke-width="1.2"/>
<!-- sidebar chevron -->
<path d="M16.5 158.5 L21.8 163.5 L16.5 168.5" stroke="#fff" stroke-width="1.8" fill="none"/>
<!-- header table icon -->
<rect x="49" y="230.8" width="13" height="11.5" fill="#f4f8fc"/>
<rect x="49" y="230.8" width="13" height="2.4" fill="#3b6ea0"/>
<path d="M49 235.8 H62 M49 238.5 H62 M53.5 233 V242.3 M58 233 V242.3" stroke="#9aa8b8" stroke-width="0.7"/>
<rect x="63.5" y="239.4" width="3.5" height="1" fill="#ddd"/>
<!-- column type icons -->
<g font-family="Liberation Sans" font-size="6.5" font-weight="bold">
<text x="74.8" y="239" fill="#5a4a0a">A</text><text x="79.5" y="235.5" fill="#5a4a0a">0</text><text x="84" y="242" fill="#5a4a0a">2</text>
<text x="208" y="239" fill="#f0f0f0">A</text><text x="212.5" y="235.5" fill="#f0f0f0">1</text><text x="216.5" y="241" fill="#f0f0f0">S</text>
<text x="325.5" y="239" fill="#f0f0f0">A</text><text x="330" y="235.5" fill="#f0f0f0">0</text><text x="334.5" y="242" fill="#f0f0f0">2</text>
<text x="609" y="239" fill="#f0f0f0">R</text><text x="613.5" y="235.5" fill="#f0f0f0">0</text><text x="618" y="242" fill="#f0f0f0">E</text>
</g>
<path d="M216 242.5 h5" stroke="#ddd" stroke-width="0.8"/>
<path d="M335 243 h4" stroke="#ddd" stroke-width="0.8"/>
<!-- Factuurklantsleutel icon -->
<path d="M449 233 h12 v9.5 h-12 z M451.5 233 v-2 h7 v2 M449 237.5 h12 M455 233 v9.5" stroke="#d8d8d8" stroke-width="0.9" fill="none"/>
<!-- calendars -->
<g stroke="#d0d0d0" stroke-width="0.9" fill="none">
<path d="M775.5 231.5 h13.5 v11 h-13.5 z M775.5 234 h13.5 M778.5 236.5 h7.5 M778.5 239 h7.5 M778.5 241 h7.5"/>
<path d="M941 231.5 h13.5 v11 h-13.5 z M941 234 h13.5 M944 236.5 h7.5 M944 239.5 h7.5"/>
</g>
<g fill="#e6e6e6"><rect x="777" y="230" width="1" height="2.5"/><rect x="787" y="230" width="1" height="2.5"/><rect x="942.5" y="230" width="1" height="2.5"/><rect x="952.5" y="230" width="1" height="2.5"/></g>
<!-- filter buttons -->
<rect x="184" y="226.5" width="19" height="20.5" fill="none" stroke="#e8d46a" stroke-width="1.2"/>
<g fill="#fbfbfb">
<rect x="186" y="228.8" width="14.5" height="15.2"/>
<rect x="303.9" y="228.8" width="14.8" height="15.2"/>
<rect x="425.8" y="228.8" width="15" height="15.2"/>
<rect x="587.5" y="228.8" width="15" height="15.2"/>
<rect x="752.5" y="228.8" width="15.5" height="15.2"/>
<rect x="918.5" y="228.8" width="15.5" height="15.2"/>
<rect x="1084" y="228.8" width="15.4" height="15.2"/>
</g>
<g fill="#2a2a2a">
<path d="M190.5 234.8 h5 l-2.5 3.2 z"/>
<path d="M308.8 234.8 h5 l-2.5 3.2 z"/>
<path d="M430.8 234.8 h5 l-2.5 3.2 z"/>
<path d="M592.5 234.8 h5 l-2.5 3.2 z"/>
<path d="M757.8 234.8 h5 l-2.5 3.2 z"/>
<path d="M923.8 234.8 h5 l-2.5 3.2 z"/>
<path d="M1089.2 234.8 h5 l-2.5 3.2 z"/>
</g>
<!-- formula collapse chevron -->
<path d="M1107.5 165 L1112.5 160.5 L1117.5 165" stroke="#444" stroke-width="1.7" fill="none"/>
<!-- scrollbar chevrons -->
<path d="M1110.5 274 L1116 267 L1121.5 274" stroke="#444" stroke-width="1.8" fill="none"/>
<path d="M1111 723.5 L1116.5 730.5 L1122 723.5" stroke="#444" stroke-width="1.8" fill="none"/>
<!-- panel -->
<path d="M1370.5 161 L1381.5 172 M1381.5 161 L1370.5 172" stroke="#e8e8e8" stroke-width="1.1"/>
<path d="M1142 205 L1147.5 199.5 V205 Z" fill="#ddd"/>
<path d="M1142 309.7 L1147.5 304.2 V309.7 Z" fill="#ddd"/>
<path d="M1162.5 371 L1171 379.5 M1171 371 L1162.5 379.5" stroke="#f0f0f0" stroke-width="1.3"/>
<g transform="translate(1369 332.8)" fill="#e8e8e8">
<circle r="3.3"/>
<rect x="-1" y="-5.5" width="2" height="11"/>
<rect x="-1" y="-5.5" width="2" height="11" transform="rotate(45)"/>
<rect x="-1" y="-5.5" width="2" height="11" transform="rotate(90)"/>
<rect x="-1" y="-5.5" width="2" height="11" transform="rotate(135)"/>
<circle r="1.5" fill="#343434"/>
</g>
</svg><div class="t" style="left:110.45px;top:2px;font-size:13px;line-height:13px;color:#fff;transform:scaleX(0.9498);-webkit-text-stroke:0.1px #fff">Naamloos - Power Query-editor</div><div class="t" style="left:9.00px;top:26px;font-size:12px;line-height:12px;color:#fff;transform:scaleX(0.9283);-webkit-text-stroke:0.05px #fff">Bestand</div><div class="t" style="left:72.50px;top:26px;font-size:12px;line-height:12px;color:#111;transform:scaleX(0.8940);">Start</div><div class="t" style="left:124.90px;top:26px;font-size:12px;line-height:12px;color:#111;transform:scaleX(0.9423);">Transformeren</div><div class="t" style="left:227.50px;top:26px;font-size:12px;line-height:12px;color:#111;transform:scaleX(0.9652);">Kolom toevoegen</div><div class="t" style="left:346.40px;top:26px;font-size:12px;line-height:12px;color:#111;transform:scaleX(0.9197);">Weergave</div><div class="t" style="left:425.70px;top:26px;font-size:12px;line-height:12px;color:#111;transform:scaleX(0.9848);">Hulpmiddelen</div><div class="t" style="left:527.20px;top:26px;font-size:12px;line-height:12px;color:#111;transform:scaleX(0.9198);">Help</div><div class="t" style="left:9.10px;top:89px;font-size:12px;line-height:12px;color:#111;transform:scaleX(0.9640);">Sluiten en</div><div class="t" style="left:9.10px;top:103px;font-size:12px;line-height:12px;color:#111;transform:scaleX(0.9341);">toepassen</div><div class="t" style="left:16.90px;top:124px;font-size:12px;line-height:12px;color:#111;transform:scaleX(0.9690);">Sluiten</div><div class="t" style="left:76.80px;top:89px;font-size:12px;line-height:12px;color:#111;transform:scaleX(0.9295);">Nieuwe</div><div class="t" style="left:79.40px;top:103px;font-size:12px;line-height:12px;color:#111;transform:scaleX(1.0067);">bron</div><div class="t" style="left:127.00px;top:89px;font-size:12px;line-height:12px;color:#111;transform:scaleX(0.8862);">Recente</div><div class="t" style="left:121.10px;top:103px;font-size:12px;line-height:12px;color:#111;transform:scaleX(0.9754);">bronnen</div><div class="t" style="left:178.75px;top:89px;font-size:12px;line-height:12px;color:#111;transform:scaleX(0.9003);">Gegevens</div><div class="t" style="left:181.25px;top:103px;font-size:12px;line-height:12px;color:#111;transform:scaleX(0.9756);">invoeren</div><div class="t" style="left:178.00px;top:124px;font-size:12px;line-height:12px;color:#111;transform:scaleX(0.9677);">Bronnen</div><div class="t" style="left:241.01px;top:89px;font-size:12px;line-height:12px;color:#111;transform:scaleX(0.9851);">Instellingen van</div><div class="t" style="left:241.75px;top:103px;font-size:12px;line-height:12px;color:#111;transform:scaleX(0.9650);">gegevensbron</div><div class="t" style="left:337.30px;top:89px;font-size:12px;line-height:12px;color:#111;transform:scaleX(0.8997);">Parameters</div><div class="t" style="left:340.20px;top:103px;font-size:12px;line-height:12px;color:#111;transform:scaleX(0.9501);">beheren</div><div class="t" style="left:337.30px;top:124px;font-size:12px;line-height:12px;color:#111;transform:scaleX(0.8981);">Parameters</div><div class="t" style="left:409.70px;top:89px;font-size:12px;line-height:12px;color:#111;transform:scaleX(0.9743);">Voorbeeld</div><div class="t" style="left:406.30px;top:103px;font-size:12px;line-height:12px;color:#111;transform:scaleX(0.9687);">vernieuwen</div><div class="t" style="left:406.30px;top:124px;font-size:12px;line-height:12px;color:#111;transform:scaleX(0.9542);">Vernieuwen</div><div class="t" style="left:479.40px;top:89px;font-size:12px;line-height:12px;color:#111;transform:scaleX(0.9597);">Kolommen</div><div class="t" style="left:486.30px;top:103px;font-size:12px;line-height:12px;color:#111;transform:scaleX(0.9467);">kiezen</div><div class="t" style="left:541.20px;top:89px;font-size:12px;line-height:12px;color:#111;transform:scaleX(0.9527);">Kolommen</div><div class="t" style="left:538.70px;top:103px;font-size:12px;line-height:12px;color:#111;transform:scaleX(0.9607);">verwijderen</div><div class="t" style="left:620.50px;top:89px;font-size:12px;line-height:12px;color:#111;transform:scaleX(0.9111);">Rijen</div><div class="t" style="left:602.60px;top:103px;font-size:12px;line-height:12px;color:#111;transform:scaleX(0.9689);">verwijderen</div><div class="t" style="left:568.80px;top:124px;font-size:12px;line-height:12px;color:#111;transform:scaleX(0.9729);">Query instviiten</div><div class="t" style="left:694.30px;top:90px;font-size:12px;line-height:12px;color:#111;transform:scaleX(0.9371);">Sorteren</div><div class="t" style="left:760.00px;top:89px;font-size:12px;line-height:12px;color:#111;transform:scaleX(0.9260);">Kolom</div><div class="t" style="left:752.30px;top:103px;font-size:12px;line-height:12px;color:#111;transform:scaleX(0.9747);">splitsen</div><div class="t" style="left:805.50px;top:89px;font-size:12px;line-height:12px;color:#111;transform:scaleX(0.9419);">Groeperen</div><div class="t" style="left:826.20px;top:103px;font-size:12px;line-height:12px;color:#111;transform:scaleX(0.9000);">op</div><div class="t" style="left:864.00px;top:124px;font-size:12px;line-height:12px;color:#111;transform:scaleX(0.9468);">Query’voegen</div><div class="t" style="left:865.70px;top:54px;font-size:12px;line-height:12px;color:#111;transform:scaleX(0.9377);">Gegevenstype: Geheel getal</div><div class="t" style="left:885.60px;top:77px;font-size:12px;line-height:12px;color:#111;transform:scaleX(0.9339);">De eerste rij als veldnamen ge...</div><div class="t" style="left:885.60px;top:100px;font-size:12px;line-height:12px;color:#111;transform:scaleX(0.9481);">Waarden vervangen</div><div class="t" style="left:1077.50px;top:89px;font-size:12px;line-height:12px;color:#111;transform:scaleX(0.9300);">Query&#x27;s</div><div class="t" style="left:1061.40px;top:103px;font-size:12px;line-height:12px;color:#111;transform:scaleX(0.9369);">samenvoegen</div><div class="t" style="left:1140.30px;top:89px;font-size:12px;line-height:12px;color:#111;transform:scaleX(0.9276);">Bestanden</div><div class="t" style="left:1136.40px;top:103px;font-size:12px;line-height:12px;color:#111;transform:scaleX(0.9770);">combineren</div><div class="t" style="left:1081.00px;top:124px;font-size:12px;line-height:12px;color:#111;transform:scaleX(0.9591);">Query&#x27;s toevoegen</div><div class="t" style="left:1230.00px;top:54px;font-size:12px;line-height:12px;color:#111;transform:scaleX(0.8996);">Tekstanalyse</div><div class="t" style="left:1230.00px;top:76px;font-size:12px;line-height:12px;color:#111;transform:scaleX(0.8768);">Visie</div><div class="t" style="left:1241.20px;top:124px;font-size:12px;line-height:12px;color:#111;transform:scaleX(0.8844);">Visie</div><div class="t" style="left:1308.20px;top:89px;font-size:12px;line-height:12px;color:#111;transform:scaleX(0.9407);">Azure Machine</div><div class="t" style="left:1324.40px;top:103px;font-size:12px;line-height:12px;color:#111;transform:scaleX(0.9524);">Leaming</div><div class="t" style="left:95.80px;top:231px;font-size:12px;line-height:12px;font-weight:700;color:#1a1a1a;transform:scaleX(0.9479);">Verkoopsleutel</div><div class="t" style="left:228.60px;top:231px;font-size:12px;line-height:12px;font-weight:700;color:#fff;transform:scaleX(0.9358);">Stadsleutel</div><div class="t" style="left:346.40px;top:231px;font-size:12px;line-height:12px;font-weight:700;color:#fff;transform:scaleX(0.9382);">Klantsleutel</div><div class="t" style="left:469.00px;top:231px;font-size:12px;line-height:12px;font-weight:700;color:#fff;transform:scaleX(0.9362);">Factuurklantsleutel</div><div class="t" style="left:630.60px;top:231px;font-size:12px;line-height:12px;font-weight:700;color:#fff;transform:scaleX(0.9602);">Voorraaditemsleutel</div><div class="t" style="left:796.30px;top:231px;font-size:12px;line-height:12px;font-weight:700;color:#fff;transform:scaleX(0.9406);">Factuurdatumsleutel</div><div class="t" style="left:962.00px;top:231px;font-size:12px;line-height:12px;font-weight:700;color:#fff;transform:scaleX(0.9224);">Leveringsdatumsle...</div><div class="t" style="left:1144.40px;top:159px;font-size:16px;line-height:16px;color:#eeeeee;transform:scaleX(1.0168);-webkit-text-stroke:0">Query-instellingen</div><div class="t" style="left:1154.60px;top:198px;font-size:12px;line-height:12px;font-weight:700;color:#fff;transform:scaleX(0.9714);">EIGENSCHAPPEN</div><div class="t" style="left:1153.60px;top:219px;font-size:12.5px;line-height:12.5px;color:#fff;transform:scaleX(1.0016);">Naam:</div><div class="t" style="left:1159.50px;top:240px;font-size:12px;line-height:12px;color:#e0e0e0;transform:scaleX(0.9081);">FactSale</div><div class="t" style="left:1154.00px;top:267px;font-size:12.5px;line-height:12.5px;color:#e3c35a;transform:scaleX(1.0004);">Alle eigenschappen</div><div class="t" style="left:1154.60px;top:302px;font-size:12px;line-height:12px;font-weight:700;color:#fff;transform:scaleX(0.9673);">TOEGEPASTE STAPPEN</div><div class="t" style="left:1175.22px;top:327px;font-size:13px;line-height:13px;color:#f0f0f0;transform:scaleX(0.9760);">Bron</div><div class="t" style="left:1175.22px;top:348px;font-size:13px;line-height:13px;color:#f0f0f0;transform:scaleX(0.9784);">Headers met verhoogd niveau</div><div class="t" style="left:1176.20px;top:369px;font-size:13px;line-height:13px;color:#f0f0f0;transform:scaleX(0.9725);">Type gewijzigd</div><div class="t" style="left:4.70px;top:754px;font-size:12px;line-height:12px;color:#f0f0f0;transform:scaleX(0.9431);">21 kolommen, 999+ RUEN</div><div class="t" style="left:155.30px;top:754px;font-size:12px;line-height:12px;color:#f0f0f0;transform:scaleX(0.9638);">Kolomprofilering op basis van de bovenste 1000 rijen</div><div class="t" style="left:1180.20px;top:754px;font-size:12px;line-height:12px;color:#f0f0f0;transform:scaleX(0.8851);">VOORBEELD GEDOWNLOAD OM 12:13 UUR</div><div class="t mono" style="left:167px;top:155px;font-family:'Liberation Mono',monospace;font-size:14px;line-height:19.4px;color:#161616;-webkit-text-stroke:0.2px #161616;transform:scaleX(0.8357);transform-origin:0 0">= Table.TransformColumnTypes(#"Headers met verhoogd niveau",{{<span style="color:#7b2525">"Sale Key"</span>, Int64.Type}, {<span style="color:#7b2525">"City Key"</span>, Int64.Type},<br>&nbsp;&nbsp;&nbsp;&nbsp;{<span style="color:#7b2525">"Customer Key"</span>, Int64.Type}, {<span style="color:#7b2525">"Bill To Customer Key"</span>, Int64.Type}, {<span style="color:#7b2525">"Stock Item Key"</span>, Int64.Type}, {<span style="color:#7b2525">"Invoice Date Key"</span>,<br>&nbsp;&nbsp;&nbsp;&nbsp;Int64.Type}, {<span style="color:#7b2525">"Delivery Date Key"</span>, Int64.Type}))</div>
<div class="t" style="left:12.5px;top:243.5px;font-size:12.5px;line-height:12.5px;color:#ececec;transform:rotate(-90deg);transform-origin:0 0;letter-spacing:-0.1px;-webkit-text-stroke:0.35px #ececec">Queries</div>
</body></html>
